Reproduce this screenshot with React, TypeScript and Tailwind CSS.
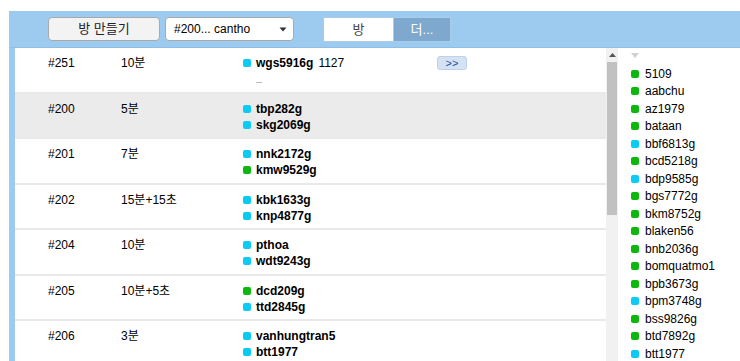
import React from "react";

type Player = { name: string; online: boolean; rating?: string };
type Room = { id: string; time: string; players: Player[]; waiting?: boolean };

const rooms: Room[] = [
  { id: "#251", time: "10분", players: [{ name: "wgs5916g", online: false, rating: "1127" }], waiting: true },
  { id: "#200", time: "5분", players: [{ name: "tbp282g", online: false }, { name: "skg2069g", online: false }] },
  { id: "#201", time: "7분", players: [{ name: "nnk2172g", online: false }, { name: "kmw9529g", online: true }] },
  { id: "#202", time: "15분+15초", players: [{ name: "kbk1633g", online: false }, { name: "knp4877g", online: false }] },
  { id: "#204", time: "10분", players: [{ name: "pthoa", online: false }, { name: "wdt9243g", online: false }] },
  { id: "#205", time: "10분+5초", players: [{ name: "dcd209g", online: true }, { name: "ttd2845g", online: false }] },
  { id: "#206", time: "3분", players: [{ name: "vanhungtran5", online: false }, { name: "btt1977", online: false }] },
];

const users: Player[] = [
  { name: "5109", online: true },
  { name: "aabchu", online: true },
  { name: "az1979", online: true },
  { name: "bataan", online: true },
  { name: "bbf6813g", online: false },
  { name: "bcd5218g", online: true },
  { name: "bdp9585g", online: false },
  { name: "bgs7772g", online: true },
  { name: "bkm8752g", online: true },
  { name: "blaken56", online: true },
  { name: "bnb2036g", online: true },
  { name: "bomquatmo1", online: true },
  { name: "bpb3673g", online: true },
  { name: "bpm3748g", online: false },
  { name: "bss9826g", online: true },
  { name: "btd7892g", online: true },
  { name: "btt1977", online: false },
];

const Dot = ({ online }: { online: boolean }) => (
  <span
    className={
      online
        ? "inline-block w-[8px] h-[8px] rounded-[2px] bg-[#0bb80b] shrink-0"
        : "inline-block w-[8px] h-[8px] rounded-[2px] bg-[#0acbf5] shrink-0"
    }
  />
);

const RoomRow = ({ room, selected }: { room: Room; selected?: boolean }) => (
  <div
    className={
      "flex h-[45.5px] border-b-2 border-[#e9e9e9] pt-[7px] text-[12px] leading-[16px] text-black " +
      (selected ? "bg-[#ebebeb]" : "bg-white")
    }
  >
    <div className="w-[106px] pl-[33px]">{room.id}</div>
    <div className="w-[122px]">{room.time}</div>
    <div className="w-[194px] flex flex-col">
      {room.players.map((p) => (
        <div key={p.name} className="flex items-center gap-[5px]">
          <Dot online={p.online} />
          <span className="font-bold">{p.name}</span>
          {p.rating && <span className="text-[12px]">{p.rating}</span>}
        </div>
      ))}
      {room.waiting && <div className="pl-[13px] text-[#aaa] text-[11px] leading-[20px]">–</div>}
    </div>
    {room.waiting && (
      <div className="pt-[1px]">
        <button className="w-[30px] h-[14px] rounded-[3px] bg-[#d4e2f3] border border-[#bfd2ea] text-[11px] leading-[12px] text-[#1f4fa8] flex items-center justify-center">
          &gt;&gt;
        </button>
      </div>
    )}
  </div>
);

export default function App() {
  return (
    <div
      className="w-[740px] h-[361px] overflow-hidden bg-white pt-[11px] pl-[9px]"
      style={{ fontFamily: '"Liberation Sans", Arial, "Noto Sans CJK KR", sans-serif' }}
    >
      <div className="bg-[#9dcbef] h-full flex flex-col">
        <div className="h-[37px] shrink-0 flex items-start pt-[6px] pl-[39px] border-b border-[#8fbfe6]">
          <button className="w-[112px] h-[24px] rounded-[4px] border border-[#a9a9a9] bg-[#f3f3f3] text-[13px] text-[#222]">
            방 만들기
          </button>
          <div className="ml-[5px] w-[129px] h-[24px] rounded-[4px] border border-[#a9a9a9] bg-white flex items-center pl-[8px] pr-[6px] text-[12px] text-black">
            <span className="flex-1">#200... cantho</span>
            <svg width="8" height="5" viewBox="0 0 8 5">
              <path d="M0.5 0.5 L7.5 0.5 L4 4.5 Z" fill="#333" />
            </svg>
          </div>
          <div className="ml-[29px] flex h-[25px] border border-[#a9cde9]">
            <div className="w-[69px] bg-white flex items-center justify-center text-[13px] text-[#444]">방</div>
            <div className="w-[57px] bg-[#7ea8cd] border-l border-[#a9cde9] flex items-center justify-center text-[13px] text-white">
              더...
            </div>
          </div>
        </div>
        <div className="flex flex-1 ml-[6px] min-h-0">
          <div className="w-[591px] bg-white overflow-hidden">
            {rooms.map((r, i) => (
              <RoomRow key={r.id} room={r} selected={i === 1} />
            ))}
          </div>
          <div className="w-[12px] bg-[#f1f1f1] flex flex-col items-center">
            <div className="h-[14px] w-full flex items-center justify-center">
              <svg width="7" height="4" viewBox="0 0 7 4">
                <path d="M0 4 L3.5 0 L7 4 Z" fill="#555" />
              </svg>
            </div>
            <div className="w-[10px] h-[153px] bg-[#c1c1c1]" />
          </div>
          <div className="flex-1 bg-white pl-[13px] pt-[5px] text-[12px] text-black overflow-hidden">
            <svg width="8" height="5" viewBox="0 0 8 5" className="mb-[7px]">
              <path d="M0 0 L8 0 L4 5 Z" fill="#d0d0d0" />
            </svg>
            {users.map((u) => (
              <div key={u.name} className="flex items-center gap-[6px] h-[17.5px]">
                <Dot online={u.online} />
                <span>{u.name}</span>
              </div>
            ))}
          </div>
        </div>
      </div>
    </div>
  );
}
